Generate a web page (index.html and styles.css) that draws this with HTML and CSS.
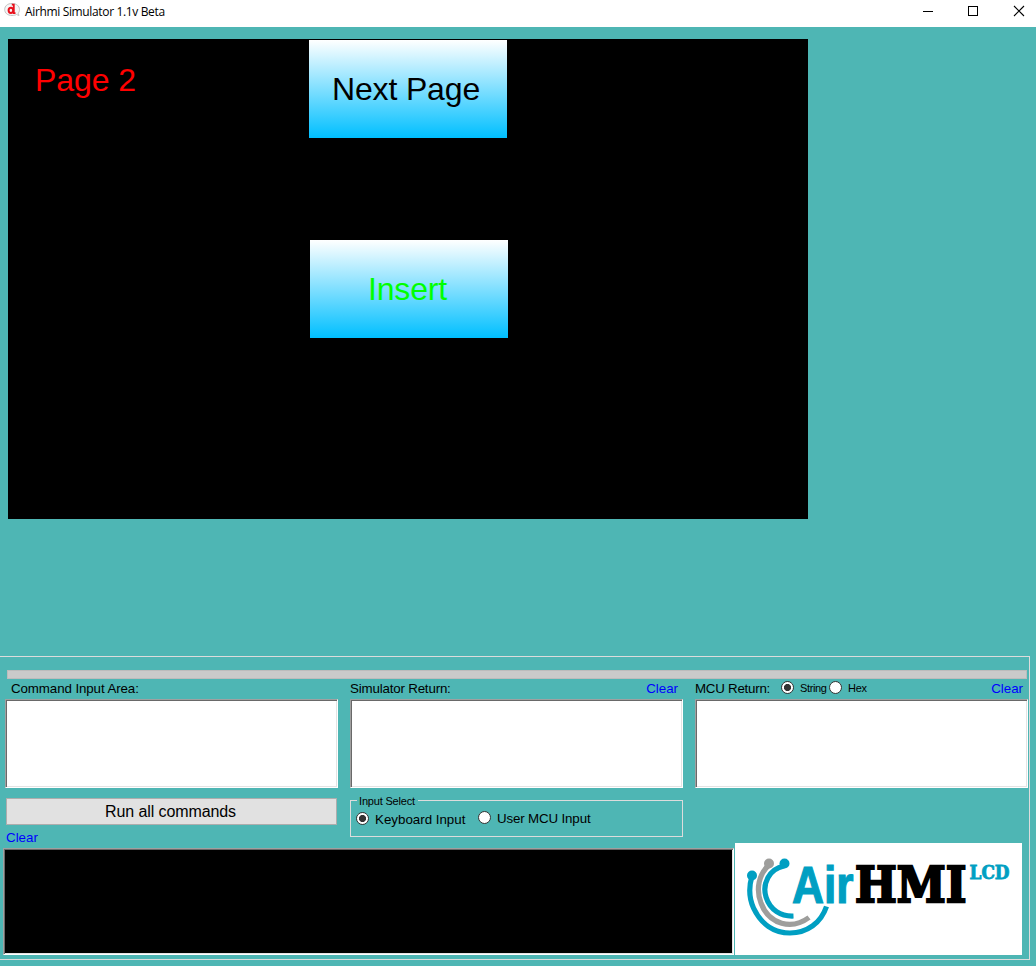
FILE: index.html
```html
<!DOCTYPE html>
<html lang="en">
<head>
<meta charset="utf-8">
<title>Airhmi Simulator</title>
<link rel="stylesheet" href="styles.css">
</head>
<body>
<header class="titlebar">
  <svg class="app-icon" width="17" height="17" viewBox="0 0 17 17">
    <path d="M8 1.500C3.500 1.500 .7 4 .7 7.500S3.500 13.500 8 13.500c2 0 3.500-.4 4.500-1l2.500 1-.8-2.300c1-1.200 1.300-2.400 1.300-3.700C15.500 4 12.500 1.500 8 1.500z" fill="#f6f6f6" stroke="#c2c2c2"/>
    <ellipse cx="6.900" cy="8.300" rx="2.300" ry="2.600" fill="none" stroke="#e8101c" stroke-width="2"/>
    <path d="M7.800 2.700h2v9M9 11.200h2.500" fill="none" stroke="#e8101c" stroke-width="1.800"/>
  </svg>
  <span class="title">Airhmi Simulator 1.1v Beta</span>
  <svg class="window-buttons" width="104" height="22" viewBox="0 0 104 22" fill="none" stroke="#000" shape-rendering="crispEdges">
    <path d="M1 11.500h10"/>
    <rect x="46.500" y="6.500" width="9" height="9"/>
    <path d="M92 6l10 10M102 6l-10 10" shape-rendering="auto" stroke-width="1.100"/>
  </svg>
</header>
<main class="screen">
  <div class="page-label">Page 2</div>
  <button class="key key-next"><span>Next Page</span></button>
  <button class="key key-insert"><span>Insert</span></button>
</main>
<section class="panel">
  <div class="bar"></div>
  <div class="columns">
    <div class="column">
      <div class="head head-first"><span class="t-command">Command Input Area:</span></div>
      <div class="box"></div>
    </div>
    <div class="column">
      <div class="head"><span class="t-sim">Simulator Return:</span><a class="clear">Clear</a></div>
      <div class="box"></div>
    </div>
    <div class="column">
      <div class="head"><span class="t-mcu">MCU Return:</span><i class="radio on"></i><span class="small t-string">String</span><i class="radio"></i><span class="small t-hex">Hex</span><a class="clear">Clear</a></div>
      <div class="box"></div>
    </div>
  </div>
  <div class="bottom">
    <div class="left">
      <div class="controls">
        <button class="run"><span>Run all commands</span></button>
        <div class="group">
          <span class="legend"><span>Input Select</span></span>
          <div class="options">
            <i class="radio on"></i><span class="t-keyboard">Keyboard Input</span>
            <i class="radio up"></i><span class="t-user">User MCU Input</span>
          </div>
        </div>
      </div>
      <div class="clear-row"><a class="clear">Clear</a></div>
      <div class="terminal"></div>
    </div>
    <svg class="logo" width="287" height="112" viewBox="0 0 287 112">
      <rect width="287" height="112" fill="#fff"/>
      <g fill="none" stroke-width="5.200">
        <path d="M17 33C14 43 14 55 18.500 65C26 81 39 90 55 90C72 90 86 80 91.500 63.500" stroke="#009fc2"/>
        <path d="M34 22C24 31 20.500 46 26 60C34 82 57 87 74 74.500" stroke="#9e9e9c"/>
        <path d="M49 23C34 26 27 41 31 54C35 67 46 73.500 58.500 73" stroke="#009fc2"/>
      </g>
      <circle cx="17" cy="32.500" r="5" fill="#009fc2"/>
      <circle cx="34" cy="20.500" r="5" fill="#9e9e9c"/>
      <circle cx="49.500" cy="20.500" r="5" fill="#009fc2"/>
      <text class="logo-air" x="57" y="59.500" textLength="61.500" lengthAdjust="spacingAndGlyphs">Air</text>
      <text class="logo-hmi" x="120" y="59" textLength="111.500" lengthAdjust="spacingAndGlyphs">HMI</text>
      <text class="logo-lcd" x="234.500" y="36" textLength="40" lengthAdjust="spacingAndGlyphs">LCD</text>
    </svg>
  </div>
</section>
</body>
</html>
```
FILE: styles.css
```css
* { box-sizing: border-box; }
body {
  margin: 0;
  width: 1036px;
  height: 966px;
  overflow: hidden;
  background: #4eb6b4;
  color: #000;
  font-family: "Liberation Sans", Arial, sans-serif;
  font-size: 13.333px;
  display: flex;
  flex-direction: column;
}
button { font-family: inherit; padding: 0; border-radius: 0; color: #000; }
.titlebar {
  height: 27px;
  flex: none;
  background: #fff;
  display: flex;
  align-items: flex-start;
  padding: 0 10px 0 4px;
}
.app-icon { margin-top: 2px; }
.title {
  font: 12px/16px "Open Sans", "Noto Sans", sans-serif;
  margin: 4px 0 0 4px;
  letter-spacing: -0.35px;
}
.window-buttons { margin-left: auto; }
.screen {
  position: relative;
  flex: none;
  width: 800px;
  height: 480px;
  margin: 12px 0 0 8px;
  background: #000;
}
.page-label {
  position: absolute;
  left: 27px;
  top: 23px;
  font-size: 32px;
  line-height: 36px;
  letter-spacing: -0.1px;
  color: #f00;
  white-space: nowrap;
}
.key {
  position: absolute;
  width: 198px;
  height: 98px;
  border: 0;
  background: linear-gradient(#fff, #00bfff);
  font-size: 32px;
  line-height: 36px;
  letter-spacing: -0.15px;
}
.key-next { left: 301px; top: 1px; padding-right: 4px; }
.key-insert { left: 302px; top: 201px; color: #0f0; padding-right: 3px; }
.panel {
  width: 1030px;
  height: 304px;
  margin-top: 137px;
  flex: none;
  border: solid #dcdcdc;
  border-width: 1px 1px 1px 0;
  padding-top: 13px;
}
.bar {
  height: 9px;
  width: 1020px;
  margin-left: 7px;
  background: #cacaca;
  border: 1px solid #bcbcbc;
}
.columns { display: flex; gap: 12px; padding-left: 5px; }
.column { width: 333px; }
.head {
  display: flex;
  align-items: center;
  height: 20px;
  padding-right: 5px;
  line-height: 18px;
  white-space: nowrap;
}
.head-first { padding-left: 6px; }
.t-command { letter-spacing: -0.1px; }
.t-sim { letter-spacing: -0.18px; }
.clear { color: #00f; }
.head .clear { margin-left: auto; }
.box, .terminal {
  border: 1px solid;
  border-color: #a0a0a0 #fff #fff #a0a0a0;
  background: #fff;
  box-shadow: inset 1px 1px #696969, inset -1px -1px #e3e3e3;
}
.box { height: 89px; }
.radio {
  display: block;
  flex: none;
  width: 13px;
  height: 13px;
  border: 1px solid #333;
  border-radius: 50%;
  background: #fff;
}
.radio.on { background: radial-gradient(circle, #333 3.2px, #fff 3.9px); }
.small { font-size: 11px; margin-bottom: 2px; }
.t-mcu { width: 86px; letter-spacing: -0.25px; }
.head .radio { margin-bottom: 3px; }
.t-string { width: 29px; margin-left: 6px; letter-spacing: -0.35px; }
.t-hex { margin-left: 6px; letter-spacing: -0.3px; }
.bottom { display: flex; height: 167px; padding-left: 3px; }
.left { width: 731px; margin-right: 1px; }
.controls { display: flex; padding: 10px 0 0 3px; height: 37px; }
.run {
  width: 331px;
  height: 27px;
  background: #e1e1e1;
  border: 1px solid #adadad;
  font-size: 16px;
  letter-spacing: -0.1px;
  padding-right: 2px;
}
.group {
  position: relative;
  width: 333px;
  height: 37px;
  margin: 2px 0 0 13px;
  border: 1px solid #dcdcdc;
}
.legend {
  position: absolute;
  left: 6px;
  top: -7px;
  height: 14px;
  width: 61px;
  padding-left: 2px;
  background: #4eb6b4;
  font-size: 11px;
  line-height: 14px;
  letter-spacing: -0.18px;
  white-space: nowrap;
}
.options { display: flex; align-items: center; padding: 8px 0 0 5px; height: 27px; white-space: nowrap; }
.t-keyboard { margin: 2px 0 0 6px; width: 103px; }
.up { margin-top: -2px; }
.t-user { margin-left: 6px; letter-spacing: -0.15px; }
.clear-row { height: 23px; padding: 4px 0 0 3px; line-height: 18px; }
.terminal { height: 107px; background: #000; }
.logo { margin-top: 55px; }
.logo-air { font: bold 51px "Liberation Sans", Arial, sans-serif; fill: #009fc2; stroke: #009fc2; stroke-width: 1.2px; }
.logo-hmi { font: bold 48.500px "DejaVu Serif", serif; fill: #000; stroke: #000; stroke-width: 2.4px; }
.logo-lcd { font: bold 18px "DejaVu Serif", serif; fill: #009fc2; stroke: #009fc2; stroke-width: .8px; }
```
